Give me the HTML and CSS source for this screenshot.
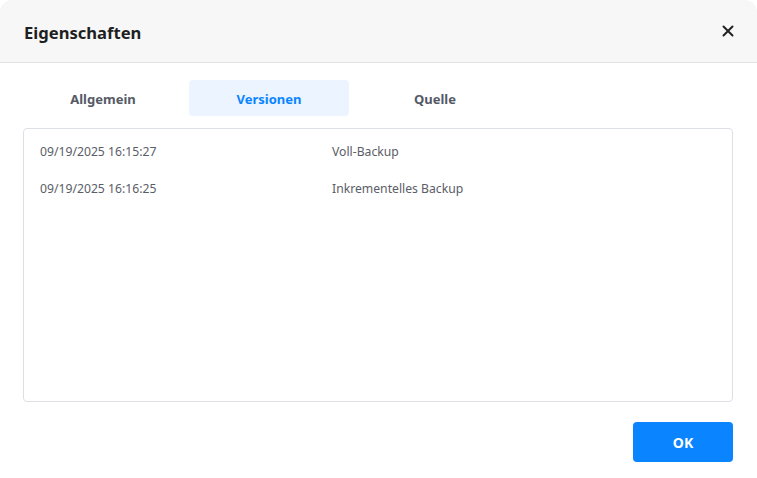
FILE: index.html
```html
<!DOCTYPE html>
<html lang="de">
<head>
<meta charset="utf-8">
<link rel="stylesheet" href="styles.css">
</head>
<body>
<div class="dialog">
  <div class="header">
    <div class="title">Eigenschaften</div>
    <div class="close">
      <svg width="12" height="12" viewBox="0 0 12 12"><path d="M1.5 1.5 L10.5 10.5 M10.5 1.5 L1.5 10.5" stroke="#222" stroke-width="2" stroke-linecap="round"/></svg>
    </div>
  </div>
  <div class="body">
    <div class="tabs">
      <div class="tab">Allgemein</div>
      <div class="tab active">Versionen</div>
      <div class="tab">Quelle</div>
    </div>
    <div class="list">
      <div class="row"><span class="date">09/19/2025 16:15:27</span><span class="type">Voll-Backup</span></div>
      <div class="row"><span class="date">09/19/2025 16:16:25</span><span class="type">Inkrementelles Backup</span></div>
    </div>
    <div class="footer">
      <button class="ok">OK</button>
    </div>
  </div>
</div>
</body>
</html>
```
FILE: styles.css
```css
* { box-sizing: border-box; }
html, body { margin: 0; padding: 0; background: #fff; }
body { font-family: "Noto Sans", "Open Sans", sans-serif; width: 757px; height: 478px; overflow: hidden; }
.dialog { width: 757px; height: 478px; background: #fff; border-radius: 12px 12px 0 0; overflow: hidden; }
.header {
  height: 63px; background: #f7f7f7; border-bottom: 1px solid #e3e3e3;
  display: flex; align-items: center; justify-content: space-between;
  padding: 0 23px 0 24px;
}
.title { font-size: 16.6px; font-weight: 700; color: #1f1f1f; margin-top: 2px; }
.close { width: 12px; height: 12px; display: flex; }
.body { padding: 17px 24px 0 23px; }
.tabs { display: flex; gap: 6px; height: 36px; }
.tab {
  width: 160px; display: flex; align-items: center; justify-content: center;
  font-size: 13px; font-weight: 700; color: #555a66; border-radius: 4px; padding-top: 2px;
}
.tab.active { background: #ebf4ff; color: #0a84ff; }
.list {
  margin-top: 12px; height: 274px; border: 1px solid #dcdfe6; border-radius: 4px;
  padding: 4px 0 0 16px;
}
.row { display: grid; grid-template-columns: 292px 1fr; height: 37px; align-items: center; font-size: 12.2px; color: #5a5d66; }
.footer { display: flex; justify-content: flex-end; margin-top: 20px; }
.ok {
  width: 100px; height: 40px; border: none; border-radius: 4px; background: #0a84ff;
  color: #fff; font-family: inherit; font-size: 14px; font-weight: 700;
}
```
